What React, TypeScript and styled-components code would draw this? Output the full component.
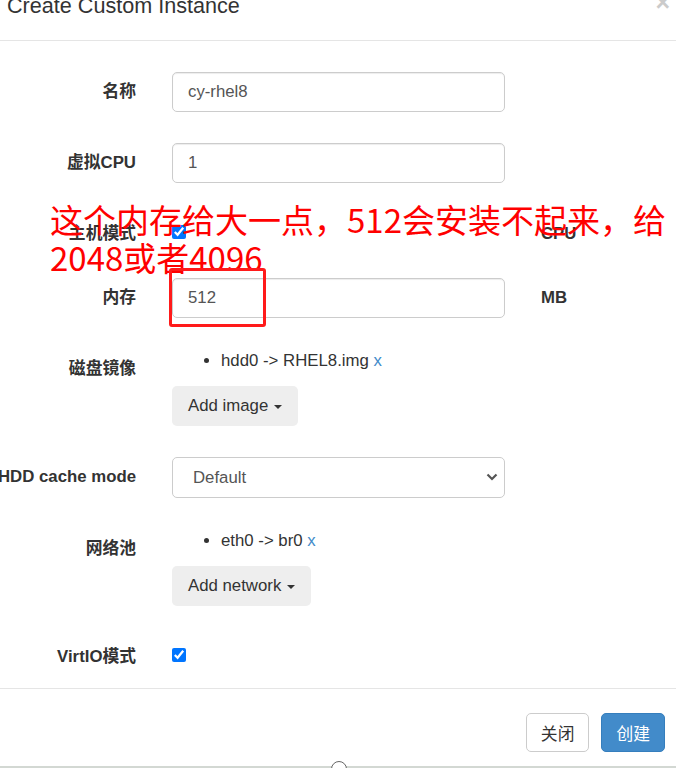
import React from 'react';
import styled, { createGlobalStyle } from 'styled-components';

const GlobalStyle = createGlobalStyle`
  html, body {
    margin: 0;
    padding: 0;
    background: #fff;
  }
  body {
    font-family: "Liberation Sans", Arial, "Noto Sans CJK SC", sans-serif;
    font-size: 16.8px;
    color: #333;
    overflow: hidden;
  }
`;

const Page = styled.div`
  position: relative;
  width: 676px;
  height: 768px;
  overflow: hidden;
`;

const Header = styled.div`
  position: relative;
  display: flow-root;
  height: 40px;
  padding-left: 7px;
  border-bottom: 1px solid #e5e5e5;
`;

const Title = styled.h4`
  margin: -6px 0 0;
  font-size: 21.6px;
  line-height: 24px;
  font-weight: 400;
  color: #333;
`;

const Close = styled.span`
  position: absolute;
  right: 6px;
  top: -10px;
  font-size: 25px;
  font-weight: 700;
  line-height: 1;
  color: #000;
  opacity: 0.2;
`;

const Body = styled.div`
  padding: 31px 0 18px;
`;

const Form = styled.div`
  display: flex;
  flex-direction: column;
  gap: 31px;
`;

const Row = styled.div`
  display: grid;
  grid-template-columns: 136px 333px auto;
  column-gap: 36px;
  align-items: start;
`;

const Label = styled.div`
  display: flex;
  justify-content: flex-end;
  white-space: nowrap;
  font-weight: 700;
  padding-top: 8px;
  line-height: 24px;
`;

const Addon = styled.div`
  font-weight: 700;
  padding-top: 8px;
  line-height: 24px;
  white-space: nowrap;
`;

const TextInput = styled.input`
  width: 100%;
  height: 40px;
  box-sizing: border-box;
  margin: 0;
  padding: 0 15px;
  border: 1px solid #ccc;
  border-radius: 5px;
  box-shadow: inset 0 1px 1px rgba(0, 0, 0, 0.075);
  font-family: inherit;
  font-size: 16.8px;
  color: #555;
  background: #fff;
`;

const SelectWrap = styled.div`
  position: relative;
`;

const Select = styled.select`
  width: 100%;
  height: 41px;
  box-sizing: border-box;
  margin: 0;
  padding: 0 20px;
  border: 1px solid #ccc;
  border-radius: 5px;
  font-family: inherit;
  font-size: 16.8px;
  color: #555;
  background: #fff;
  appearance: none;
`;

const Chevron = styled.svg`
  position: absolute;
  right: 7px;
  top: 16px;
  pointer-events: none;
`;

const CheckCell = styled.div`
  height: 33px;
  box-sizing: border-box;
  padding-top: 11px;
`;

const Check = styled.input`
  display: block;
  margin: 0;
  width: 14px;
  height: 14px;
  accent-color: #0075ff;
`;

const Stack = styled.div`
  display: flex;
  flex-direction: column;
  align-items: flex-start;
`;

const Items = styled.ul`
  margin: 0;
  padding-left: 49px;
  line-height: 24px;
  list-style: disc;
`;

const Remove = styled.a`
  color: #428bca;
  text-decoration: none;
`;

const DropButton = styled.button`
  margin-top: 13px;
  height: 40px;
  padding: 0 16px;
  display: inline-flex;
  align-items: center;
  gap: 6px;
  border: none;
  border-radius: 5px;
  background: #eeeeee;
  font-family: inherit;
  font-size: 16.8px;
  color: #333;
`;

const Caret = styled.span`
  width: 0;
  height: 0;
  border-top: 4px solid #333;
  border-left: 4px solid transparent;
  border-right: 4px solid transparent;
  margin-top: 2px;
`;

const Footer = styled.div`
  display: flex;
  justify-content: flex-end;
  gap: 12px;
  padding: 24px 11px 14px;
  border-top: 1px solid #e5e5e5;
  border-bottom: 2px solid #d3d8d3;
`;

const Button = styled.button<{ $primary?: boolean }>`
  height: 39px;
  padding: 0 14px;
  border-radius: 5px;
  border: 1px solid ${(p) => (p.$primary ? '#357ebd' : '#ccc')};
  background: ${(p) => (p.$primary ? '#428bca' : '#fff')};
  color: ${(p) => (p.$primary ? '#fff' : '#333')};
  font-family: inherit;
  font-size: 16.8px;
`;

const Cursor = styled.span`
  position: absolute;
  left: 331px;
  top: 761px;
  width: 14px;
  height: 14px;
  border: 1px solid #666;
  border-radius: 50%;
  background: #fff;
`;

const Note = styled.div`
  position: absolute;
  left: 50px;
  top: 200px;
  font-family: "Noto Sans CJK SC", sans-serif;
  font-size: 33px;
  line-height: 38px;
  color: #ff0000;
  white-space: nowrap;
`;

const Mark = styled.div`
  position: absolute;
  left: 169px;
  top: 268px;
  width: 97px;
  height: 59px;
  box-sizing: border-box;
  border: 3px solid #ff1a1a;
  border-radius: 3px;
`;

const App: React.FC = () => {
  return (
    <Page>
      <GlobalStyle />
      <Header>
        <Title>Create Custom Instance</Title>
        <Close>×</Close>
      </Header>
      <Body>
        <Form>
          <Row>
            <Label>名称</Label>
            <TextInput defaultValue="cy-rhel8" />
          </Row>
          <Row>
            <Label>虚拟CPU</Label>
            <TextInput defaultValue="1" />
          </Row>
          <Row>
            <Label>主机模式</Label>
            <CheckCell>
              <Check type="checkbox" defaultChecked />
            </CheckCell>
            <Addon>CPU</Addon>
          </Row>
          <Row>
            <Label>内存</Label>
            <TextInput defaultValue="512" />
            <Addon>MB</Addon>
          </Row>
          <Row>
            <Label>磁盘镜像</Label>
            <Stack>
              <Items>
                <li>
                  {'hdd0 -> RHEL8.img '}
                  <Remove href="#">x</Remove>
                </li>
              </Items>
              <DropButton>
                Add image <Caret />
              </DropButton>
            </Stack>
          </Row>
          <Row>
            <Label>HDD cache mode</Label>
            <SelectWrap>
              <Select defaultValue="default">
                <option value="default">Default</option>
              </Select>
              <Chevron width="12" height="8" viewBox="0 0 12 8">
                <path d="M1.5 1.5 L6 6 L10.5 1.5" fill="none" stroke="#555" strokeWidth="2.2" />
              </Chevron>
            </SelectWrap>
          </Row>
          <Row>
            <Label>网络池</Label>
            <Stack>
              <Items>
                <li>
                  {'eth0 -> br0 '}
                  <Remove href="#">x</Remove>
                </li>
              </Items>
              <DropButton>
                Add network <Caret />
              </DropButton>
            </Stack>
          </Row>
          <Row>
            <Label>VirtIO模式</Label>
            <CheckCell>
              <Check type="checkbox" defaultChecked />
            </CheckCell>
          </Row>
        </Form>
      </Body>
      <Footer>
        <Button>关闭</Button>
        <Button $primary>创建</Button>
      </Footer>
      <Cursor />
      <Note>
        这个内存给大一点，512会安装不起来，给
        <br />
        2048或者4096
      </Note>
      <Mark />
    </Page>
  );
};

export default App;
